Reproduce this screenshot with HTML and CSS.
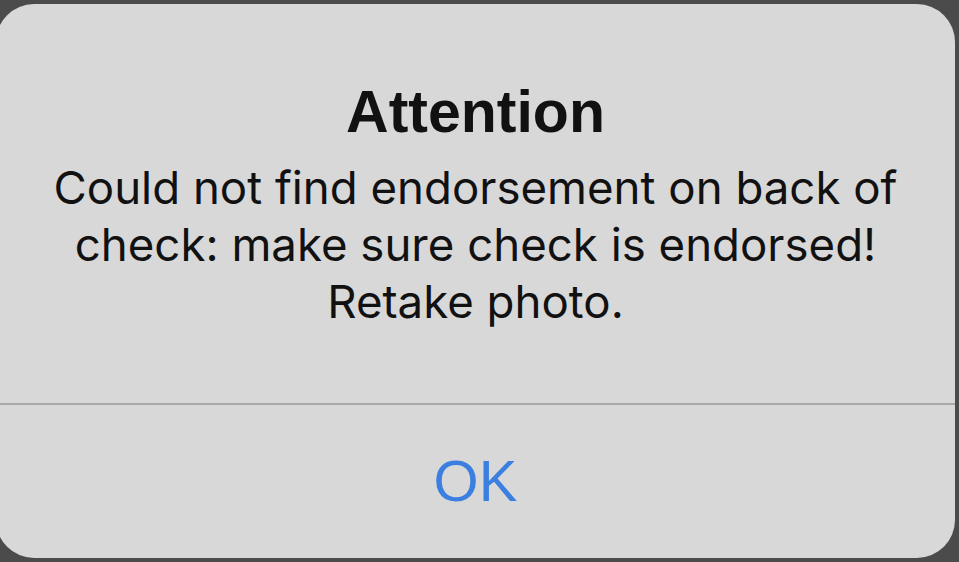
FILE: index.html
```html
<!DOCTYPE html>
<html lang="en">
<head>
    <meta charset="UTF-8">
    <meta name="viewport" content="width=device-width, initial-scale=1.0">
    <title>Attention</title>
    <link rel="stylesheet" href="styles.css">
</head>
<body>
    <!-- Alert -->
    <div class="alert">
        <div class="alert-body">
            <h1 class="alert-title">Attention</h1>
            <p class="alert-message">Could not find endorsement on back of<br>check: make sure check is endorsed!<br>Retake photo.</p>
        </div>
        <button class="alert-button">OK</button>
    </div>
</body>
</html>
```

FILE: styles.css
```css
/* Latar gelap di belakang alert */
body {
    margin: 0;
    height: 562px;
    overflow: hidden;
    background-color: #4b4b4b;
    font-family: "Liberation Sans", Arial, sans-serif;
    color: #111;
}
/* Kotak alert */
.alert {
    margin: 4px 4px 0 -4px;
    height: 554px;
    background-color: #d8d8d8;
    border-radius: 38px;
    display: flex;
    flex-direction: column;
    text-align: center;
}
.alert-body {
    padding: 73px 20px 0;
    height: 326px;
    border-bottom: 2px solid #a9a9a9;
}
.alert-title {
    margin: 0;
    font-size: 59px;
    line-height: 70px;
    font-weight: bold;
}
.alert-message {
    margin: 12px 0 0;
    font-family: Inter, "Liberation Sans", sans-serif;
    font-size: 45.6px;
    line-height: 57px;
}
/* Tombol OK */
.alert-button {
    flex: 1;
    border: none;
    background: none;
    padding: 0 0 2px;
    font-family: inherit;
    font-size: 58px;
    color: #3b7fe0;
    cursor: pointer;
}
```
